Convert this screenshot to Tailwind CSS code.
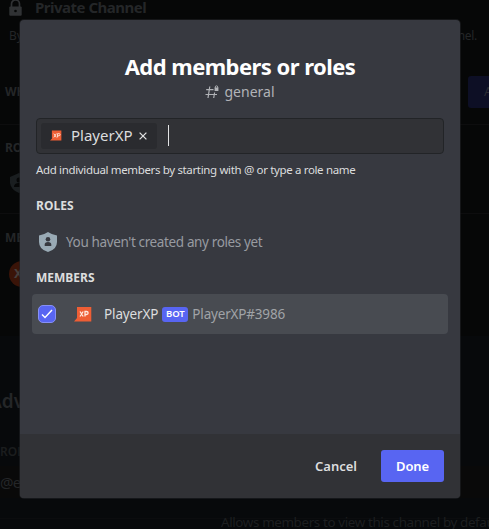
<!DOCTYPE html>
<html lang="en">
<head>
<meta charset="utf-8">
<title>Add members or roles</title>
<script src="https://cdn.jsdelivr.net/npm/@tailwindcss/browser@4"></script>
</head>
<body class="relative h-[529px] w-[489px] overflow-hidden bg-[#07090b] font-['Noto_Sans','Open_Sans',sans-serif] whitespace-nowrap">

<!-- Channel settings behind the dialog -->
<main class="flex h-[529px] w-[489px] flex-col overflow-hidden text-[#242628]">
  <section class="flex h-[336px] shrink-0 flex-col bg-[#060707]">
    <div class="flex h-[17px] items-start gap-[13px] pl-[9px]">
      <svg class="h-[17px] w-[13px]" viewBox="0 0 13 17"><path d="M2.500 7V4a4 4 0 0 1 8 0v3" fill="none" stroke="#303234" stroke-width="1.700"/><path d="M1.300 6.400h10.400q1 0 1 1v7.400q0 1-1 1H1.300q-1 0-1-1V7.400q0-1 1-1Z" fill="#303234"/><circle cx="6.500" cy="11" r="1.300" fill="#060707"/></svg>
      <h3 class="-mt-px text-[15px] leading-[16px] font-bold tracking-[-0.5px]">Private Channel</h3>
    </div>
    <div class="mt-[10px] flex h-[18px] items-center justify-between pr-[12px] pl-[9px] text-[12px]"><span>By</span><span class="tracking-[-0.3px]">nel.</span></div>
    <div class="mt-[31px] flex h-[32px] items-center justify-between pl-[5px]">
      <span class="text-[12px] font-bold">WHO</span>
      <div class="flex h-[32px] w-[21px] items-center overflow-hidden rounded-l-[3px] bg-[#0d0f25] pl-[16px] text-[13px] text-[#2b2c33]">A</div>
    </div>
    <div class="mt-[16px] h-px bg-[#0d0d0e]"></div>
    <div class="mt-[15px] h-[16px] pl-[5px] text-[12px] leading-[16px] font-bold">ROLES</div>
    <svg class="mt-[17px] ml-[9px] h-[20px] w-[20px]" viewBox="0 0 20 20"><path d="M10 0 19 4v6q-1 7-9 10Q2 17 1 10V4Z" fill="#1a1e20"/><circle cx="10" cy="7" r="2.500" fill="#060707"/><path d="M5 14q0-4 5-4t5 4Z" fill="#060707"/></svg>
    <div class="mt-[20px] h-px bg-[#0d0d0e]"></div>
    <div class="mt-[16px] h-[16px] pl-[5px] text-[12px] leading-[16px] font-bold">MEMBERS</div>
    <div class="mt-[15px] ml-[9px] flex h-[26px] w-[26px] items-center rounded-full bg-[#3a1408] pl-[5px] text-[13px] font-bold text-[#45403e]">XP</div>
  </section>
  <h2 class="mt-[51px] h-[28px] text-[19px] leading-[28px] font-semibold"><span class="ml-[-11px]">Advanced</span></h2>
  <div class="mt-[29px] h-[16px] text-[12px] leading-[16px] font-semibold text-[#1b1d1e]">ROLES</div>
  <div class="mt-[6px] flex h-[32px] items-center bg-[#090909] text-[15px] tracking-[-0.8px]">@everyone</div>
  <div class="mt-[20px] h-px shrink-0 bg-[#0b0c0e]"></div>
</main>
<p class="absolute top-[512px] left-[221px] text-[13.400px] leading-[20px] tracking-[-0.370px] text-[#1d1f20]">Allows members to view this channel by default</p>

<!-- Dialog -->
<div class="absolute top-[20px] left-[20px] flex h-[478px] w-[440px] flex-col overflow-hidden rounded-[4px] bg-[#373940] text-[#dcddde] shadow-[0_0_0_1px_rgba(32,34,37,0.6)]">
  <header class="flex flex-col items-center pt-[31px]">
    <h1 class="h-[31px] text-[22px] leading-[30px] font-bold tracking-[-0.550px] text-white">Add members or roles</h1>
    <div class="flex h-[20px] items-center gap-[5px] text-[14px] leading-[20px] text-[#b1b3b7]">
      <svg class="h-[14px] w-[14px]" viewBox="0 0 14 14"><path d="M4.800 1.500 3 13M9.600 7.500 8.700 13M1.200 4.600h7.300M.5 9.500h11.500" fill="none" stroke="currentColor" stroke-width="1.200"/><path d="M10.300 3V2a1.200 1.200 0 0 1 2.400 0v1" fill="none" stroke="currentColor" stroke-width=".9"/><path d="M9.600 2.500h3.800v3.500H9.600Z" fill="currentColor"/></svg>
      <span>general</span>
    </div>
  </header>

  <div class="flex flex-1 flex-col">
    <div class="mx-[16px] mt-[16px] flex h-[36px] items-center rounded-[4px] border border-[#222427] bg-[#313236] pl-[4px]">
      <div class="-mt-px flex h-[26px] w-[116px] items-center rounded-[3px] bg-[#2a2b2f] pl-[9px]">
        <svg class="h-[11px] w-[12px]" viewBox="0 0 19 16"><path d="M3 0h15v16H0l3-3Z" fill="#ee5e35"/><path d="m6 5 4 6m0-6-4 6m6 0V5h2q2 0 2 1.700t-2 1.700h-2" fill="none" stroke="#ffe1d5" stroke-width="1.500"/></svg>
        <span class="ml-[9px] text-[15px]">PlayerXP</span>
        <svg class="ml-[6px] h-[8px] w-[8px]" viewBox="0 0 8 8"><path d="m.6.600 6.800 6.800m0-6.800L.6 7.400" stroke="currentColor" stroke-width="1.300"/></svg>
      </div>
      <div class="-mt-px ml-[11px] h-[21px] w-px bg-[#e2e3e4]"></div>
    </div>
    <p class="mt-[8px] h-[16px] pl-[16px] text-[11.500px] leading-[16px] tracking-[-0.350px]">Add individual members by starting with @ or type a role name</p>
    <h2 class="mt-[20px] h-[16px] pl-[16px] text-[12px] leading-[16px] font-bold tracking-[0.050px]">ROLES</h2>
    <div class="mt-[16px] flex h-[24px] items-center gap-[9px] pl-[19px] text-[13.500px] tracking-[-0.370px] text-[#989ba0]">
      <svg class="h-[20px] w-[18px]" viewBox="0 0 18 20"><path d="M9 0q3 2.300 9 3.500V10q0 7.500-9 10-9-2.500-9-10V3.500Q6 2.300 9 0Z" fill="#99aab5"/><circle cx="9" cy="7.200" r="2.300" fill="#373940"/><path d="M5.700 14v-1.500Q5.700 10 9 10t3.300 2.500V14Z" fill="#373940"/></svg>
      <span>You haven't created any roles yet</span>
    </div>
    <h2 class="mt-[16px] h-[16px] pl-[16px] text-[12px] leading-[16px] font-bold">MEMBERS</h2>
    <div class="mx-[12px] mt-[8px] flex h-[40px] items-center rounded-[4px] bg-[#484b51] pl-[6px] text-[13.500px]">
      <div class="flex h-[18px] w-[18px] items-center justify-center rounded-[5px] border border-[#8790f5] bg-[#5865f2]">
        <svg class="h-[10px] w-[12px]" viewBox="0 0 12 10"><path d="m1 5.500 3 3L11 1" fill="none" stroke="white" stroke-width="1.400"/></svg>
      </div>
      <svg class="ml-[18px] h-[16px] w-[18px]" viewBox="0 0 18 16"><path d="M3 1h14.300v14.500H0l3-3.500Z" fill="#ee5e35"/><path d="m6 5.500 3.200 5m0-5L6 10.500m5 0v-5h1.500q1.600 0 1.600 1.500t-1.600 1.500H11" fill="none" stroke="#ffe9e0" stroke-width="1.300"/></svg>
      <span class="ml-[12px] tracking-[-0.130px]">PlayerXP</span>
      <span class="ml-[4px] flex h-[15px] w-[26px] items-center justify-center rounded-[3px] bg-[#5865f2] text-[9.500px] font-semibold text-white">BOT</span>
      <span class="ml-[4px] tracking-[-0.180px] text-[#a0a3a7]">PlayerXP#3986</span>
    </div>
  </div>

  <footer class="flex h-[64px] shrink-0 items-center justify-end bg-[#313236] pr-[16px] text-[13px] font-semibold">
    <button class="mt-[2px] mr-[24px]">Cancel</button>
    <button class="h-[32px] w-[63px] rounded-[3px] bg-[#5865f2] pt-[2px] tracking-[-0.150px] text-white">Done</button>
  </footer>
</div>
</body>
</html>
